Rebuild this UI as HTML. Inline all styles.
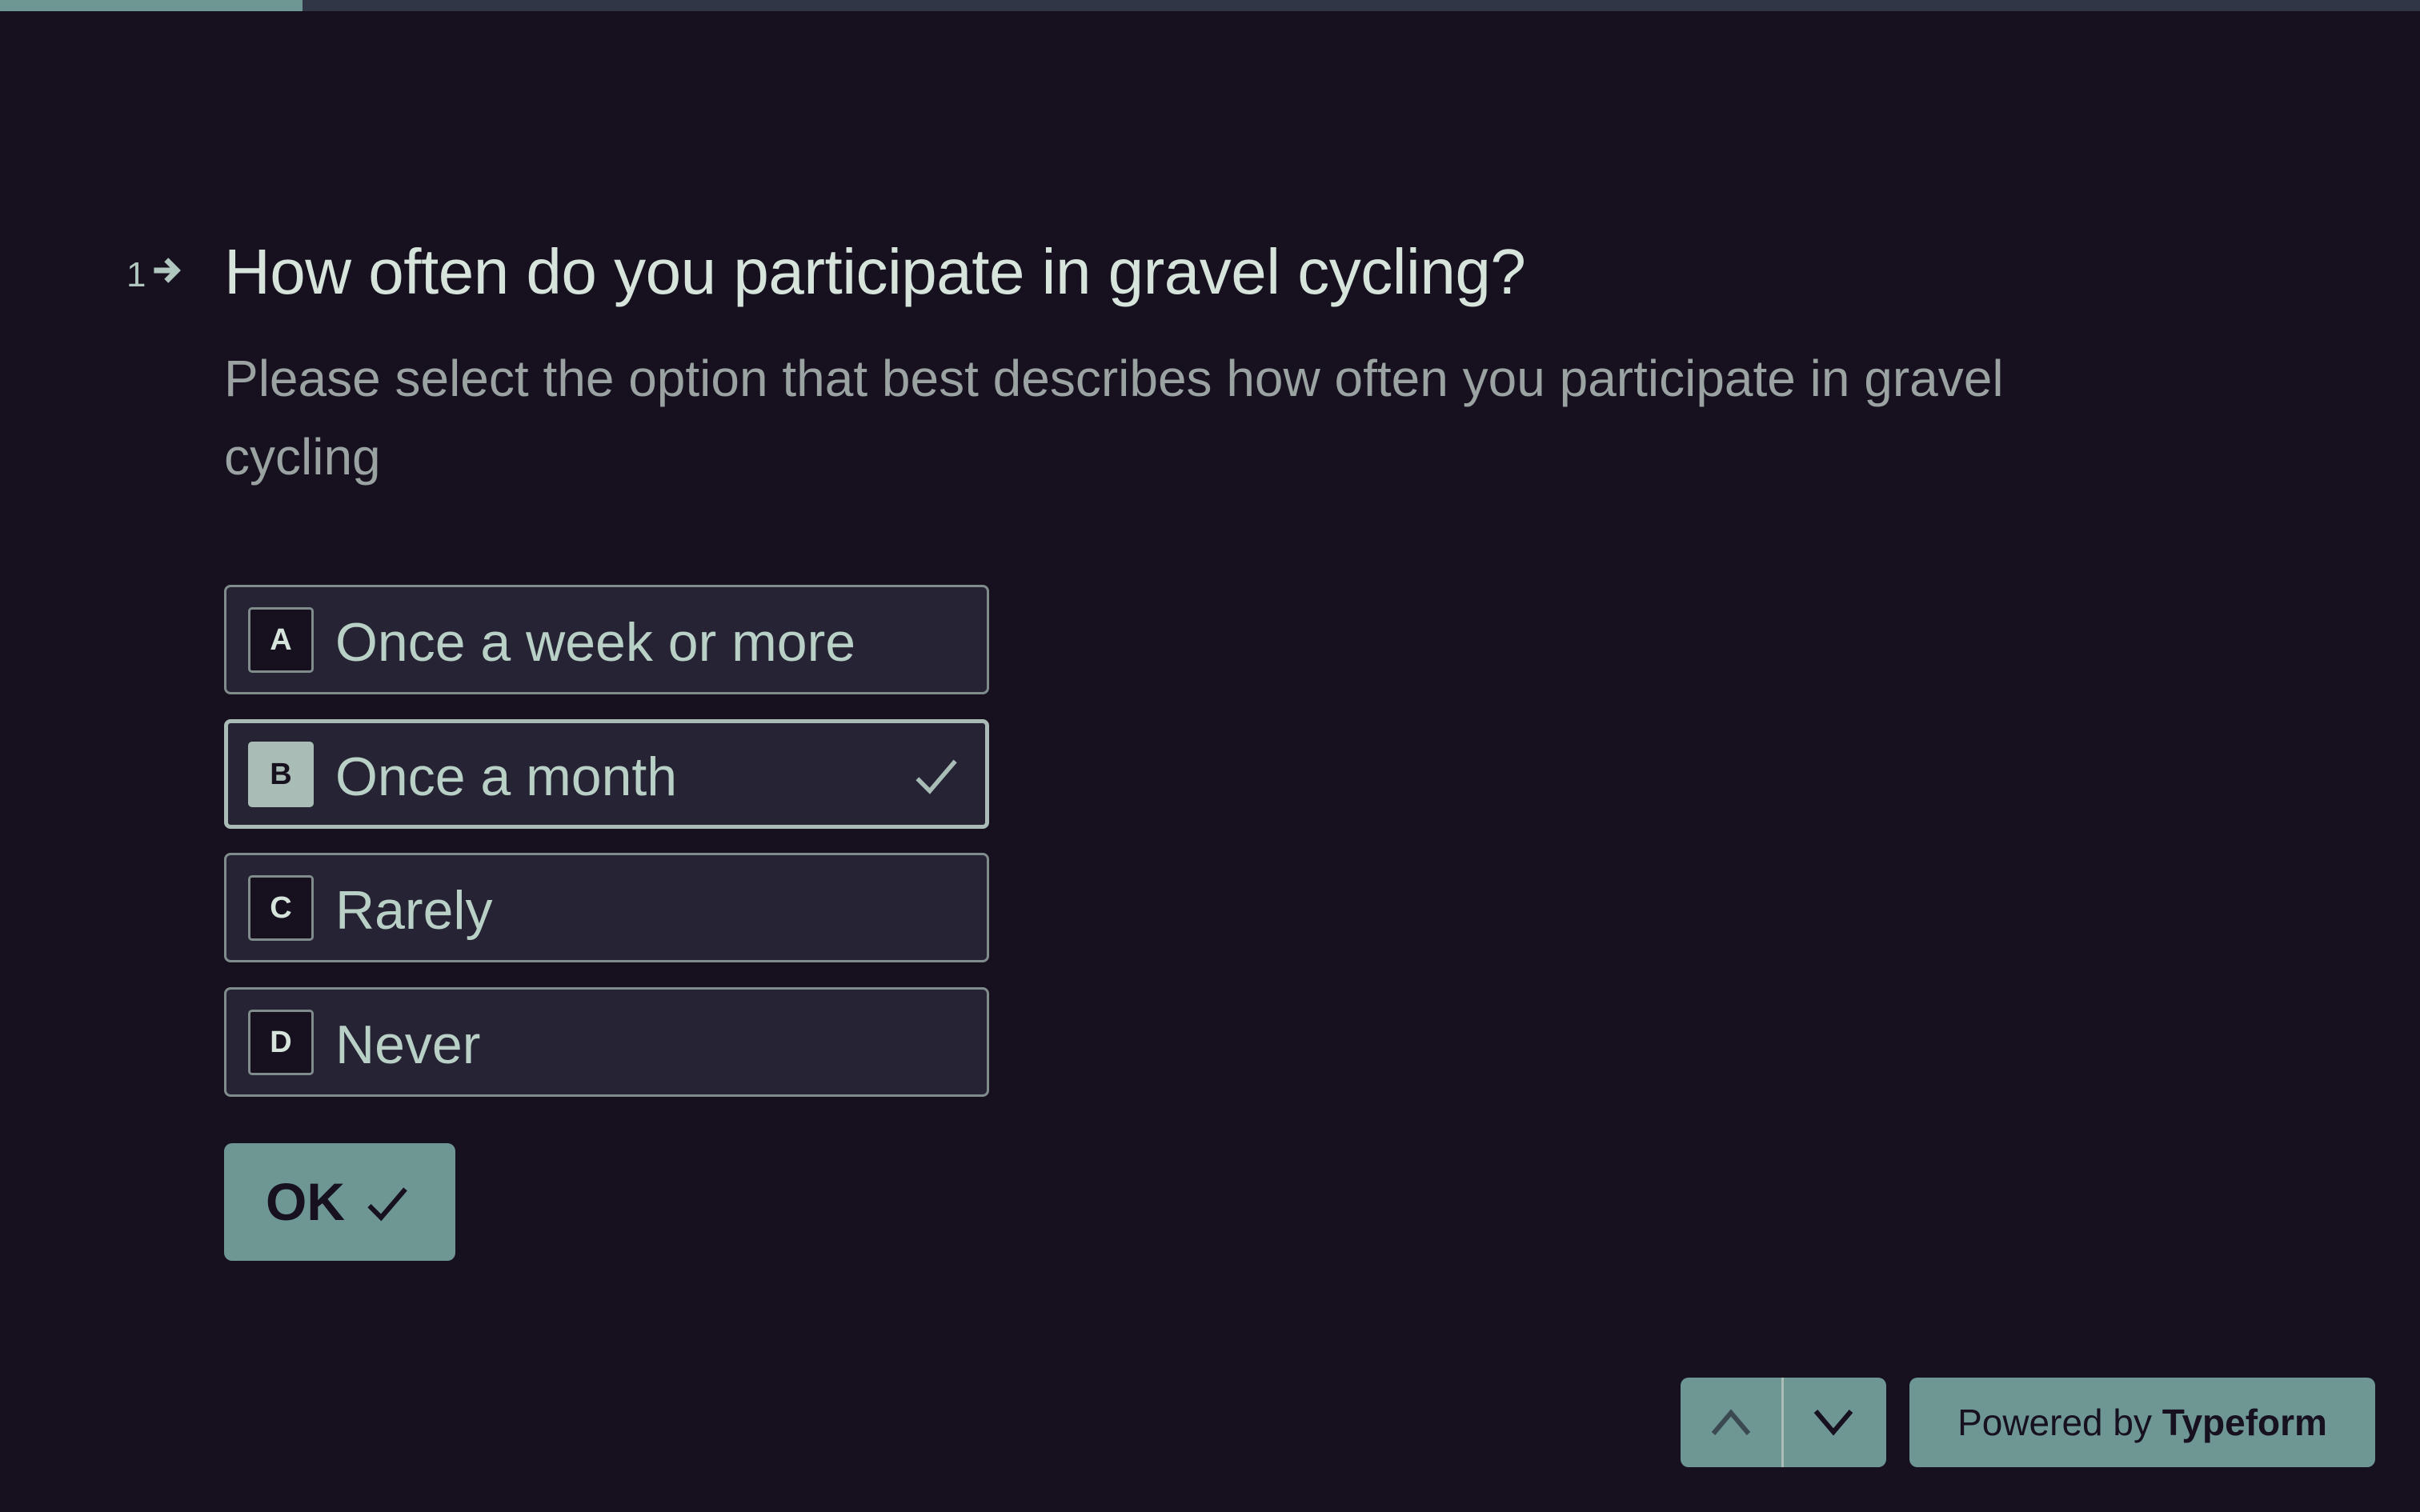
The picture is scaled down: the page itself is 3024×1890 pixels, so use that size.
<!DOCTYPE html>
<html><head><meta charset="utf-8"><style>
*{margin:0;padding:0;box-sizing:border-box}
body{width:3024px;height:1890px;background:#16101f;font-family:"Liberation Sans",sans-serif;position:relative;overflow:hidden}
.bar{position:absolute;left:0;top:0;width:3024px;height:14px;background:#303646}
.bar div{width:378px;height:14px;background:#6e9794}
.num{position:absolute;left:158px;top:316px;font-size:44px;color:#b0c6bf}
.q{position:absolute;left:280px;top:294px;font-size:80px;color:#d6e4dc;white-space:nowrap;letter-spacing:-0.5px}
.d{position:absolute;left:280px;top:424px;width:2750px;font-size:64px;line-height:98px;color:#9aa2a2}
.opt{position:absolute;left:280px;width:956px;height:137px;background:#262334;border:3px solid #7f8c8b;border-radius:8px}
.opt.sel{border:5px solid #a9bdb6}
.key{position:absolute;left:27px;top:25px;width:82px;height:82px;border:3px solid #7f8c8b;border-radius:5px;background:#16101f;color:#d6e4dc;font-weight:bold;font-size:38px;text-align:center;line-height:76px}
.sel .key{left:25px;top:23px;background:#a9bdb6;border-color:#a9bdb6;color:#16101f}
.txt{position:absolute;left:136px;top:30px;font-size:68px;color:#b9d0c6;white-space:nowrap}
.sel .txt{left:134px;top:28px}
.ok{position:absolute;left:280px;top:1429px;width:289px;height:147px;background:#6e9794;border-radius:10px;color:#16101f;font-weight:bold;font-size:66px;line-height:147px;padding-left:52px}
.nav{position:absolute;left:2100px;top:1722px;width:257px;height:112px;background:#6e9794;border-radius:10px}
.nav .div{position:absolute;left:126px;top:0;width:3px;height:112px;background:#a9bdb6}
.pw{position:absolute;left:2386px;top:1722px;width:582px;height:112px;background:#6e9794;border-radius:10px;color:#16101f;font-size:46px;line-height:112px;text-align:center}
</style></head><body>
<div class="bar"><div></div></div>
<div class="num">1<svg width="44" height="44" viewBox="0 0 20 20" style="margin-left:6px;vertical-align:-2px"><path d="M2 10h13M9 4l6 6-6 6" stroke="#b0c6bf" stroke-width="3.2" fill="none"/></svg></div>
<div class="q">How often do you participate in gravel cycling?</div>
<div class="d">Please select the option that best describes how often you participate in gravel<br>cycling</div>
<div class="opt" style="top:731px"><div class="key">A</div><div class="txt">Once a week or more</div></div>
<div class="opt sel" style="top:899px"><div class="key">B</div><div class="txt">Once a month</div>
<svg style="position:absolute;left:857px;top:42px" width="56" height="50" viewBox="0 0 60 55"><path d="M4 30l17 17L56 6" stroke="#a9bdb6" stroke-width="6" fill="none"/></svg></div>
<div class="opt" style="top:1066px"><div class="key">C</div><div class="txt">Rarely</div></div>
<div class="opt" style="top:1234px"><div class="key">D</div><div class="txt">Never</div></div>
<div class="ok">OK<svg style="position:absolute;left:178px;top:52px" width="52" height="48" viewBox="0 0 60 55"><path d="M4 30l17 17L56 6" stroke="#16101f" stroke-width="7" fill="none"/></svg></div>
<div class="nav"><div class="div"></div>
<svg style="position:absolute;left:37px;top:36px" width="52" height="40" viewBox="0 0 52 40"><path d="M4 34L26 8l22 26" stroke="#3b4a50" stroke-width="6" fill="none"/></svg>
<svg style="position:absolute;left:165px;top:36px" width="52" height="40" viewBox="0 0 52 40"><path d="M4 6l22 26L48 6" stroke="#16101f" stroke-width="6" fill="none"/></svg></div>
<div class="pw">Powered by <b>Typeform</b></div>
</body></html>
